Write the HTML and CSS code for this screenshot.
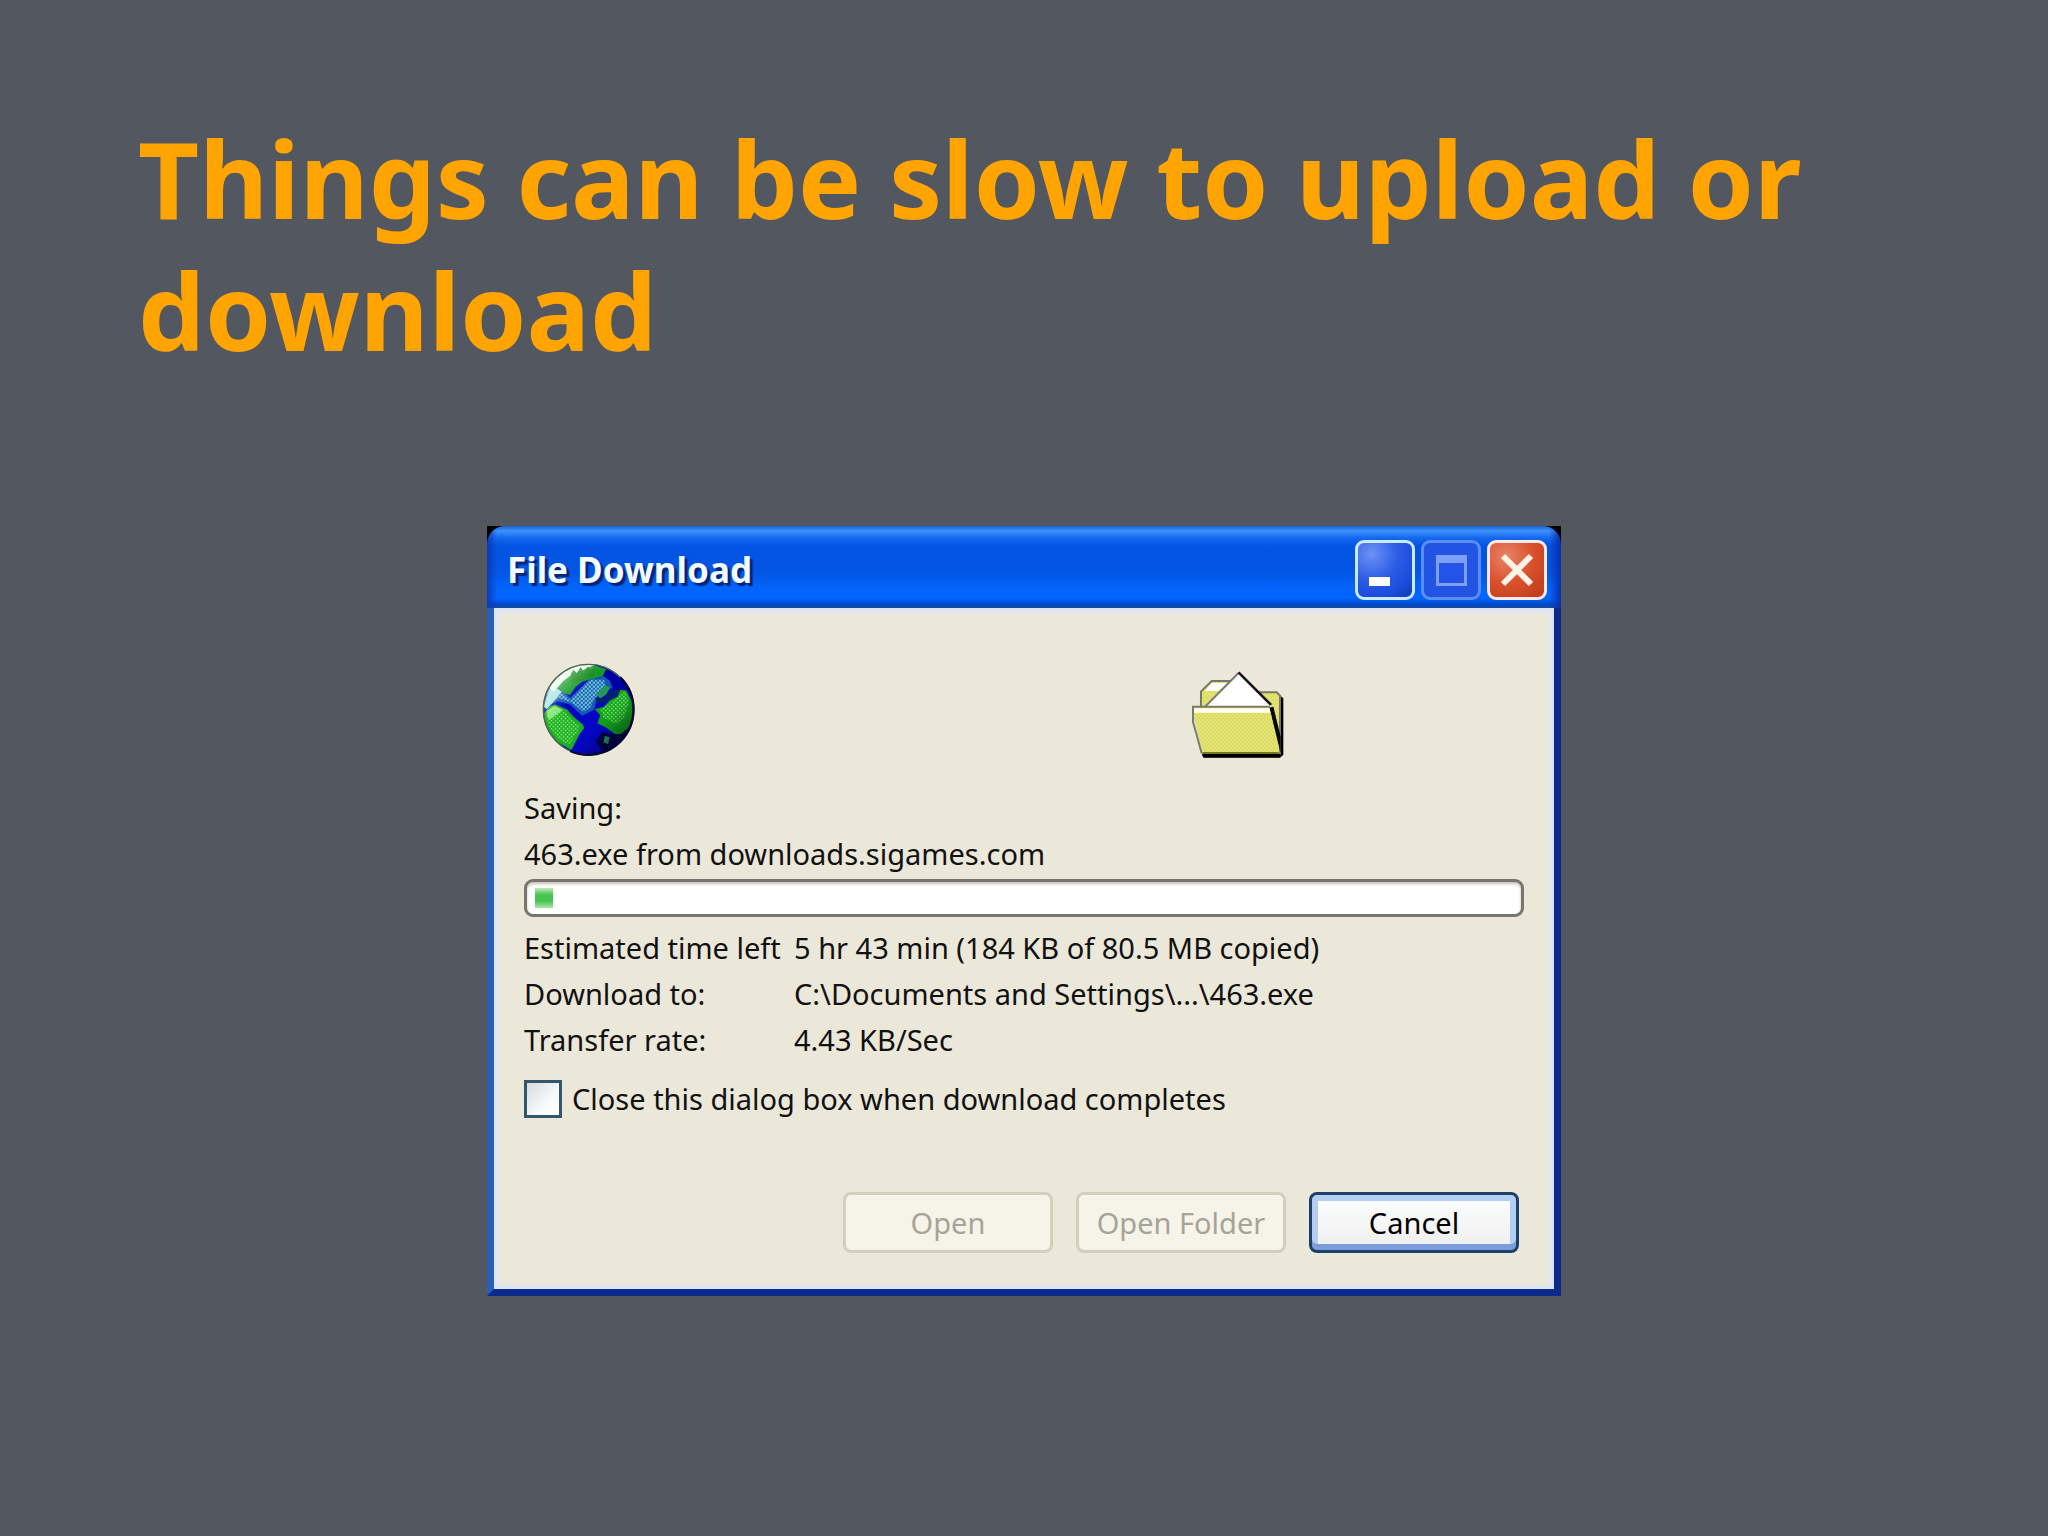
FILE: index.html
```html
<!DOCTYPE html>
<html lang="en">
<head>
<meta charset="utf-8">
<title>Things can be slow to upload or download</title>
<link rel="stylesheet" href="styles.css">
</head>
<body>
<main class="slide">
  <h1 class="headline">Things can be slow to upload or download</h1>

  <section class="dialog" aria-labelledby="dialog-title">
    <header class="titlebar">
      <h2 class="title" id="dialog-title">File Download</h2>
      <div class="controls">
        <button class="control" type="button" aria-label="Minimize">
          <svg viewBox="0 0 60 60" aria-hidden="true"><path d="M14 37h21v9H14z" fill="#fff"/></svg>
        </button>
        <button class="control control-off" type="button" aria-label="Maximize" disabled>
          <svg viewBox="0 0 60 60" aria-hidden="true"><path d="M15 15h31v31H15zM18 23v20h25V23z" fill="#7c9ffa" fill-rule="evenodd"/></svg>
        </button>
        <button class="control control-close" type="button" aria-label="Close">
          <svg viewBox="0 0 60 60" aria-hidden="true"><path d="M16 16l28 28M44 16L16 44" stroke="#fff2e6" stroke-width="6" fill="none"/></svg>
        </button>
      </div>
    </header>

    <div class="content">
      <div class="icons">
        <svg class="globe" viewBox="70 70 278 278" aria-hidden="true">
          <defs>
            <pattern id="dots-blue" width="12" height="12" patternUnits="userSpaceOnUse">
              <path d="M0 0h6v6H0zM6 6h6v6H6z" fill="#74c8d8"/>
            </pattern>
            <pattern id="dots-green" width="12" height="12" patternUnits="userSpaceOnUse">
              <path d="M0 0h5v5H0zM6 6h5v5H6z" fill="#74e468"/>
            </pattern>
            <linearGradient id="shade" x1="0" y1="0" x2="1" y2="1">
              <stop offset="0" stop-color="#fff" stop-opacity=".8"/>
              <stop offset=".35" stop-color="#fff" stop-opacity="0"/>
              <stop offset=".65" stop-color="#000" stop-opacity="0"/>
              <stop offset="1" stop-color="#000040" stop-opacity=".75"/>
            </linearGradient>
            <clipPath id="disc"><circle cx="209" cy="209" r="136"/></clipPath>
          </defs>
          <g clip-path="url(#disc)">
            <path d="M70 70h278v278H70z" fill="#0406c4"/>
            <path d="M70 210l20-84 24 10 40 38 60-58 50-10 20 34-48 30-10 40-36 18-36-34-36-10-38 18z" fill="#1558b4"/>
            <path d="M76 204l14-66 30 16 34 26 58-60 44 0 6 30-34 24-14 30-20 12-34-26-40-16-30 18z" fill="url(#dots-blue)"/>
            <path d="M75 200l22-66 12 8 20 14-16 20-16 18-12 14z" fill="#a8e6e0"/>
            <path d="M96 140l56-56 50-14 66 20-16 18-30 8-32 10-20 16-16 24-20-6-16-16z" fill="#149a22"/>
            <path d="M92 142l46-58 60-14 36 4-26 10-28 14-20 6-26 20-18 20-12 12z" fill="#eafce8"/>
            <path d="M156 104l8-14 10 10 12-18 8 14 14-16 8 12 14-12-4 28-40 14-26 8z" fill="#118a1c"/>
            <path d="M76 222l14-22 20-6 34 14 22 24 26 22 4 10-14 20-24 46-40-22-36-44z" fill="#1eae24"/>
            <path d="M82 224l12-18 20-6 26 14 18 22 26 22-10 22-22 34-34-16-28-40z" fill="url(#dots-green)"/>
            <path d="M84 214l22-16 26 12-18 14-24 18z" fill="#8ae67c"/>
            <path d="M234 166l24-30 16 8-12 20-18 12z" fill="#24994c"/>
            <path d="M266 80l40 16 36 56-30 6-28-10-12-26-20-14z" fill="#0000a4"/>
            <path d="M228 174l30 2 20-26 44 0 0 10-28 6-24 20-34 4z" fill="#00236e"/>
            <path d="M228 208l28-8 16-18 24-12 8-20 18 2 22 44 2 38-28 50-24 2-34-24-24-12 8-24z" fill="#12a01a"/>
            <path d="M244 208l28-18 30-26 18-10 10 34-14 44-24 20-38-18z" fill="url(#dots-green)"/>
            <path d="M230 304l20-28 40 8 16-2 30-24-10 60-60 40z" fill="#00004e"/>
            <path d="M258 288l14 4-4 20-14-4z" fill="#249b55"/>
            <circle cx="209" cy="209" r="138" fill="url(#shade)"/>
          </g>
          <circle cx="209" cy="209" r="135" fill="none" stroke="#4c6650" stroke-width="4"/>
          <path d="M304 113a136 136 0 0 1 0 192 136 136 0 0 1-150 28" fill="none" stroke="#02052e" stroke-width="7"/>
        </svg>
        <svg class="folder" viewBox="92 66 280 262" aria-hidden="true">
          <defs>
            <pattern id="dots-yellow" width="12" height="12" patternUnits="userSpaceOnUse">
              <path d="M0 0h12v12H0z" fill="#d9dc50"/>
              <path d="M0 0h6v6H0zM6 6h6v6H6z" fill="#e6e48b"/>
            </pattern>
          </defs>
          <path d="M358 138l12 10v170l-10 9H130l-6-10h230z" fill="#000"/>
          <path d="M122 174v-46l32-32h56l34 34h106l10 10v174H140z" fill="url(#dots-yellow)" stroke="#77776a" stroke-width="6"/>
          <path d="M154 102h48l-28 24h-40z" fill="#fff"/>
          <path d="M134 174L235 72l98 98v8z" fill="#fff"/>
          <path d="M134 174L235 72" stroke="#777" stroke-width="6"/>
          <path d="M235 70l98 98" stroke="#111" stroke-width="8"/>
          <path d="M328 176l12-2 22 90v50z" fill="#060606"/>
          <path d="M98 176h230l30 136H126l-12-54-16-60z" fill="url(#dots-yellow)"/>
          <path d="M100 178h228l3 14H102z" fill="#fffff0"/>
          <path d="M330 174H98v46l10 34 16 60" fill="none" stroke="#7b7b6a" stroke-width="6"/>
          <path d="M126 313h230" stroke="#77781c" stroke-width="6"/>
          <path d="M128 321h232" stroke="#000" stroke-width="10"/>
        </svg>
      </div>

      <p class="line">Saving:</p>
      <p class="line">463.exe from downloads.sigames.com</p>
      <div class="progress" role="progressbar" aria-label="Download progress" aria-valuemin="0" aria-valuemax="100" aria-valuenow="1">
        <span class="chunk"></span>
      </div>

      <dl class="facts">
        <dt>Estimated time left</dt><dd>5 hr 43 min (184 KB of 80.5 MB copied)</dd>
        <dt>Download to:</dt><dd>C:\Documents and Settings\...\463.exe</dd>
        <dt>Transfer rate:</dt><dd>4.43 KB/Sec</dd>
      </dl>

      <div class="option">
        <input class="check" type="checkbox" id="close-when-done">
        <label for="close-when-done">Close this dialog box when download completes</label>
      </div>

      <div class="actions">
        <button class="action" type="button" disabled>Open</button>
        <button class="action" type="button" disabled>Open Folder</button>
        <button class="action action-default" type="button">Cancel</button>
      </div>
    </div>
  </section>
</main>
</body>
</html>
```
FILE: styles.css
```css
* {
  box-sizing: border-box;
}

body {
  margin: 0;
  min-height: 100vh;
  background: #535760;
}

.slide {
  padding: 112px 138px;
}

.headline {
  margin: 0 0 150px;
  font: 700 106px/132px "Noto Sans", "Open Sans", sans-serif;
  color: #ffa400;
}

/* The square black corners show behind the rounded title bar. */
.dialog {
  max-width: 1074px;
  margin: 0 auto;
  background: #000;
  font: 400 29px/46px "Noto Sans", "Open Sans", sans-serif;
  color: #111;
}

.titlebar {
  display: flex;
  align-items: center;
  justify-content: space-between;
  height: 82px;
  padding: 12px 14px 6px 20px;
  border-radius: 18px 18px 0 0;
  background:
    linear-gradient(90deg, #0a3cb8 0, #0a3cb800 10px, #0a2fb000 calc(100% - 12px), #0a2fa8 100%),
    linear-gradient(#1c62d0 0, #3d92fc 5px, #1468ee 12px, #0354e2 20px, #0355e4 45px, #0364fb 62px, #0366ff 72px, #0246c8 79px, #1a4c96 82px);
}

.title {
  margin: 0;
  font: 700 35px/50px "Noto Sans", "Open Sans", sans-serif;
  color: #f2fbff;
  text-shadow: 3px 3px 1px #06257c;
}

.controls {
  display: flex;
  gap: 6px;
}

.control {
  width: 60px;
  height: 60px;
  padding: 0;
  border: 3px solid #c8ecff;
  border-radius: 9px;
  background: radial-gradient(circle at 25% 20%, #6d92f4, #2c5ce6 45%, #1a4cdc 75%, #123caa);
}

.control svg {
  display: block;
  width: 60px;
  height: 60px;
  margin: -3px;
}

.control-off {
  border-color: #5b8df5;
  background: radial-gradient(circle at 50% 45%, #2454ea, #2253de);
}

.control-close {
  border-color: #ffe9ea;
  background: radial-gradient(circle at 30% 25%, #e88468, #d9502c 50%, #bd3a18);
}

.content {
  padding: 50px 30px 36px;
  border: solid #0c2a8c;
  border-width: 0 7px 7px;
  border-left-color: #2a5fb8;
  background: #ebe8da;
  box-shadow: inset 0 0 0 2px #d9e6f8, inset 0 0 3px 5px #e3e6ee;
}

.icons {
  display: flex;
  align-items: flex-end;
  justify-content: space-between;
  height: 100px;
  margin-bottom: 27px;
  padding: 0 240px 0 18px;
}

.globe {
  width: 93px;
  height: 93px;
  margin-bottom: 2px;
}

.folder {
  width: 93px;
  height: 87px;
}

.line {
  margin: 0;
}

.progress {
  display: flex;
  align-items: center;
  height: 38px;
  margin: 2px 0 8px;
  padding: 0 8px;
  border: 3px solid #77756c;
  border-radius: 9px;
  background: #fff;
  box-shadow: inset 0 2px 3px #c4c2b8;
}

.chunk {
  width: 18px;
  height: 20px;
  background: linear-gradient(#b8edb9, #48c350 35%, #48c350 65%, #a8e8aa);
}

.facts {
  display: grid;
  grid-template-columns: 270px 1fr;
  margin: 0 0 13px;
}

.facts dd {
  margin: 0;
}

.option {
  display: flex;
  align-items: center;
  gap: 10px;
}

.check {
  appearance: none;
  width: 38px;
  height: 38px;
  margin: 0;
  border: 3px solid #32566c;
  background: linear-gradient(135deg, #d8d9de, #f6f9fc 60%, #fff);
}

.actions {
  display: flex;
  justify-content: flex-end;
  gap: 23px;
  margin-top: 70px;
  padding-right: 5px;
}

.action {
  width: 210px;
  height: 61px;
  padding: 0;
  border: 3px solid #d2cfbf;
  border-radius: 8px;
  background: #f6f4e8;
  font: inherit;
  color: #a6a498;
}

.action-default {
  border-color: #1d4068;
  background: linear-gradient(#fbfdff, #f4f5f4 60%, #edeeec);
  box-shadow: inset 0 -6px 0 #7c9cdc, inset 0 0 0 6px #b4cdf2;
  color: #000;
}
```
